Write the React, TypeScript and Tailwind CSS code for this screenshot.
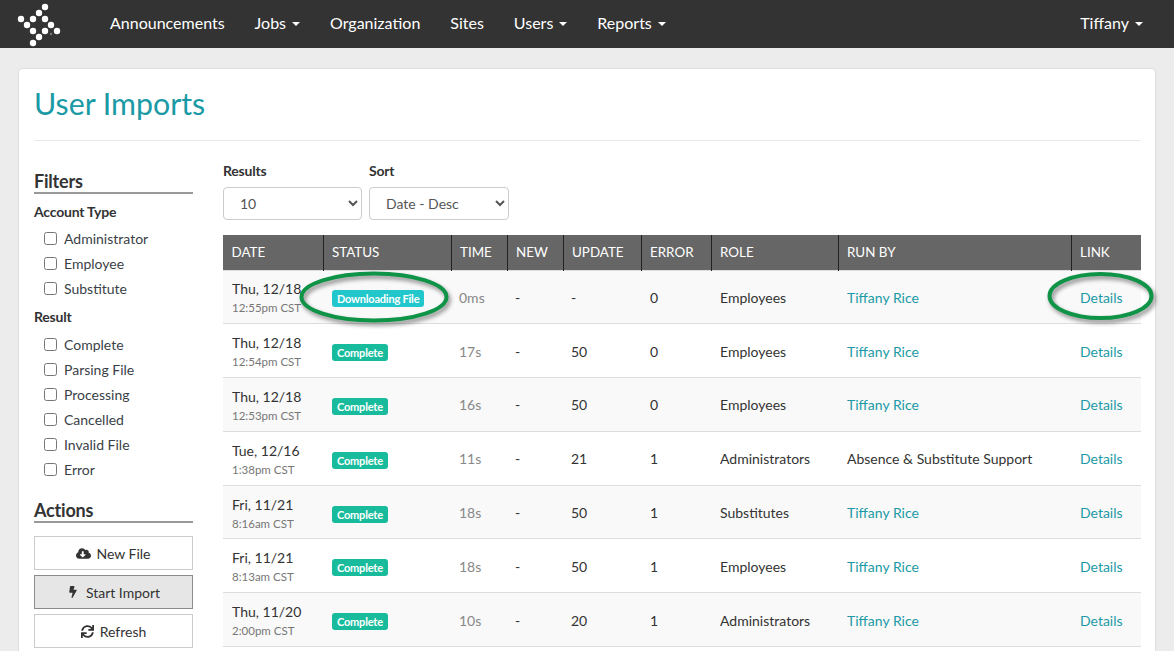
import { FaBolt, FaCloudDownloadAlt, FaSync } from 'react-icons/fa'

const logoDots = [
  [45, 7], [39, 13], [45, 19], [33, 19], [21, 19], [27, 25],
  [51, 25], [33, 31], [45, 31], [57, 31], [39, 37], [33, 43],
]

const rows = [
  { date: 'Thu, 12/18', time: '12:55pm CST', status: 'Downloading File', took: '0ms', created: '-', update: '-', error: '0', role: 'Employees', by: 'Tiffany Rice' },
  { date: 'Thu, 12/18', time: '12:54pm CST', status: 'Complete', took: '17s', created: '-', update: '50', error: '0', role: 'Employees', by: 'Tiffany Rice' },
  { date: 'Thu, 12/18', time: '12:53pm CST', status: 'Complete', took: '16s', created: '-', update: '50', error: '0', role: 'Employees', by: 'Tiffany Rice' },
  { date: 'Tue, 12/16', time: '1:38pm CST', status: 'Complete', took: '11s', created: '-', update: '21', error: '1', role: 'Administrators', by: 'Absence & Substitute Support' },
  { date: 'Fri, 11/21', time: '8:16am CST', status: 'Complete', took: '18s', created: '-', update: '50', error: '1', role: 'Substitutes', by: 'Tiffany Rice' },
  { date: 'Fri, 11/21', time: '8:13am CST', status: 'Complete', took: '18s', created: '-', update: '50', error: '1', role: 'Employees', by: 'Tiffany Rice' },
  { date: 'Thu, 11/20', time: '2:00pm CST', status: 'Complete', took: '10s', created: '-', update: '20', error: '1', role: 'Administrators', by: 'Tiffany Rice' },
]

const columns = [
  ['DATE', 'w-[100px]'],
  ['STATUS', 'w-[128px]'],
  ['TIME', 'w-[56px]'],
  ['NEW', 'w-[56px]'],
  ['UPDATE', 'w-[78px]'],
  ['ERROR', 'w-[70px]'],
  ['ROLE', 'w-[127px]'],
  ['RUN BY', 'w-[233px]'],
  ['LINK', 'w-[70px]'],
]

function Caret() {
  return <span className="ml-[6px] inline-block align-middle border-x-4 border-t-4 border-x-transparent border-t-white" />
}

function Check({ label }: { label: string }) {
  return (
    <label className="flex h-[25px] items-center pl-[10px] text-[14px] text-[#3a3f47]">
      <input type="checkbox" className="mr-[7px] size-[13px]" />
      {label}
    </label>
  )
}

function SideHeading({ children }: { children: string }) {
  return <h3 className="border-b-2 border-[#999] text-[18px] leading-[22px] font-bold tracking-[-0.2px] text-[#333]">{children}</h3>
}

export default function App() {
  return (
    <div className="relative h-[651px] overflow-hidden bg-[#ececec] font-['Lato',sans-serif] text-[14px] text-[#333]">
      {/* Nav */}
      <nav className="flex h-12 items-center bg-[#333] text-[16px] text-white">
        <svg className="h-12 w-[110px] shrink-0" viewBox="0 0 110 48">
          {logoDots.map(([cx, cy]) => <circle key={`${cx}-${cy}`} cx={cx} cy={cy} r="3.2" fill="#fff" />)}
          <circle cx="51" cy="34" r="1.2" fill="#777" />
        </svg>
        <div className="flex gap-[30px] pb-[3px]">
          <span>Announcements</span>
          <span>Jobs<Caret /></span>
          <span>Organization</span>
          <span>Sites</span>
          <span>Users<Caret /></span>
          <span>Reports<Caret /></span>
        </div>
        <span className="ml-auto mr-[31px] pb-[3px]">Tiffany<Caret /></span>
      </nav>

      {/* Card */}
      <main className="mx-[18px] mt-[20px] h-[700px] rounded-[4px] border border-[#ddd] bg-white px-[15px]">
        <h1 className="border-b border-[#e8e8e8] pt-[14px] pb-[17px] text-[30.3px] leading-[40px] text-[#1b9aa6]">User Imports</h1>

        <div className="flex gap-[30px] pt-[20px]">
          {/* Sidebar */}
          <aside className="w-[159px] shrink-0 pt-[9px]">
            <SideHeading>Filters</SideHeading>
            <div className="pt-[8px] pb-[4px] text-[14px] leading-[20px] font-bold tracking-[-0.2px] text-[#333]">Account Type</div>
            <Check label="Administrator" />
            <Check label="Employee" />
            <Check label="Substitute" />
            <div className="pt-[6px] pb-[5px] text-[14px] leading-[20px] font-bold tracking-[-0.2px] text-[#333]">Result</div>
            <Check label="Complete" />
            <Check label="Parsing File" />
            <Check label="Processing" />
            <Check label="Cancelled" />
            <Check label="Invalid File" />
            <Check label="Error" />
            <div className="pt-[17px]">
              <SideHeading>Actions</SideHeading>
            </div>
            <div className="flex flex-col gap-[5px] pt-[13px]">
              <button className="flex h-[34px] items-center justify-center gap-[5px] border border-[#ccc] bg-white text-[#333]"><FaCloudDownloadAlt className="size-[15px]" />New File</button>
              <button className="flex h-[34px] items-center justify-center gap-[7px] border border-[#8c8c8c] bg-[#e6e6e6] text-[#333]"><FaBolt className="size-[12px]" />Start Import</button>
              <button className="flex h-[34px] items-center justify-center gap-[6px] border border-[#ccc] bg-white text-[#333]"><FaSync className="size-[13px]" />Refresh</button>
            </div>
          </aside>

          {/* Results */}
          <section className="w-[918px] shrink-0">
            <div className="flex gap-[7px]">
              <div className="w-[139px]">
                <div className="mb-[6px] h-[20px] leading-[20px] font-bold tracking-[-0.2px]">Results</div>
                <select className="h-[33px] w-full rounded-[4px] border border-[#ccc] bg-white pl-[12px] text-[14px] text-[#555]"><option>10</option></select>
              </div>
              <div className="w-[140px]">
                <div className="mb-[6px] h-[20px] leading-[20px] font-bold tracking-[-0.2px]">Sort</div>
                <select className="h-[33px] w-full rounded-[4px] border border-[#ccc] bg-white pl-[12px] text-[14px] text-[#555]"><option>Date - Desc</option></select>
              </div>
            </div>

            <table className="mt-[15px] w-[918px] table-fixed border-collapse">
              <thead>
                <tr className="h-[35px] border-b border-[#ddd] bg-[#666] text-left text-[13.4px] text-white">
                  {columns.map(([name, width], i) => (
                    <th key={name} className={`${width} px-[8.5px] font-normal ${i < columns.length - 1 ? 'border-r border-[#222]' : ''}`}>{name}</th>
                  ))}
                </tr>
              </thead>
              <tbody>
                {rows.map((r, i) => (
                  <tr key={i} className={`h-[53.8px] border-b border-[#ddd] ${i % 2 === 0 ? 'bg-[#f9f9f9]' : 'bg-white'}`}>
                    <td className="px-[9px] pt-[2px]">
                      <div className="leading-[20px]">{r.date}</div>
                      <div className="text-[11.5px] leading-[17px] text-[#777]">{r.time}</div>
                    </td>
                    <td className="px-[9px] pt-[2px]">
                      <span className={`inline-block rounded-[3px] px-[5px] text-[11px] leading-[17px] font-bold tracking-[-0.2px] text-white ${r.status === 'Complete' ? 'bg-[#18bc9c]' : 'bg-[#22c7cc]'}`}>{r.status}</span>
                    </td>
                    <td className="px-[8px] pt-[1px] text-[#888]">{r.took}</td>
                    <td className="px-[8px] pt-[1px]">{r.created}</td>
                    <td className="px-[8px] pt-[1px]">{r.update}</td>
                    <td className="px-[9px] pt-[1px]">{r.error}</td>
                    <td className="px-[9px] pt-[1px]">{r.role}</td>
                    <td className={`px-[9px] pt-[1px] ${r.by === 'Tiffany Rice' ? 'text-[#1b9aa6]' : ''}`}>{r.by}</td>
                    <td className="px-[9px] pt-[1px] text-[#1b9aa6]">Details</td>
                  </tr>
                ))}
              </tbody>
            </table>
          </section>
        </div>
      </main>

      {/* Green annotation circles */}
      <svg className="pointer-events-none absolute top-0 left-0 h-[651px] w-[1174px]" viewBox="0 0 1174 651">
        <ellipse className="drop-shadow-[2px_3px_2px_rgba(0,0,0,0.45)]" cx="374" cy="297" rx="72.5" ry="23.5" fill="none" stroke="#0f9347" strokeWidth="4" />
        <ellipse className="drop-shadow-[2px_3px_2px_rgba(0,0,0,0.45)]" cx="1100.5" cy="296" rx="51" ry="22" fill="none" stroke="#0f9347" strokeWidth="4" />
      </svg>
    </div>
  )
}
